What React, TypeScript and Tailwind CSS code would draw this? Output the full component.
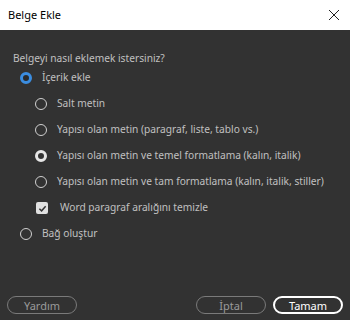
import React from 'react';

function Radio({ state }: { state: 'blue' | 'white' | 'off' }) {
  if (state === 'blue') {
    return <span className="box-border block h-[12px] w-[12px] shrink-0 rounded-full border-[3px] border-[#3b8de0] bg-[#2a2a2a]" />;
  }
  if (state === 'white') {
    return <span className="box-border block h-[12px] w-[12px] shrink-0 rounded-full border-[3px] border-[#e6e6e6] bg-[#333333]" />;
  }
  return <span className="box-border block h-[12px] w-[12px] shrink-0 rounded-full border border-[#d0d0d0]" />;
}

function Option({ label, state, indent }: { label: string; state: 'blue' | 'white' | 'off'; indent?: boolean }) {
  return (
    <div className={`flex h-[26px] items-center gap-[10px] whitespace-nowrap ${indent ? 'pl-[35px]' : 'pl-[20px]'}`}>
      <Radio state={state} />
      <span>{label}</span>
    </div>
  );
}

export default function App() {
  return (
    <div
      className="flex h-[320px] w-[350px] flex-col bg-[#323232] text-[10.2px] text-[#c0c0c0]"
      style={{ fontFamily: '"Noto Sans", "Open Sans", sans-serif' }}
    >
      {/* Title bar */}
      <div className="flex h-[30px] items-center justify-between bg-white pl-[8px] pr-[10px] text-[11px] text-black">
        <span>Belge Ekle</span>
        <svg width="12" height="12" viewBox="0 0 12 12">
          <path d="M1 1 L11 11 M11 1 L1 11" stroke="#222" strokeWidth="1" />
        </svg>
      </div>

      <div className="flex flex-1 flex-col pt-[21px]">
        <div className="pl-[13px] leading-[14px]">Belgeyi nasıl eklemek istersiniz?</div>
        <div className="flex flex-col">
          <Option label="İçerik ekle" state="blue" />
          <Option label="Salt metin" state="off" indent />
          <Option label="Yapısı olan metin (paragraf, liste, tablo vs.)" state="off" indent />
          <Option label="Yapısı olan metin ve temel formatlama (kalın, italik)" state="white" indent />
          <Option label="Yapısı olan metin ve tam formatlama (kalın, italik, stiller)" state="off" indent />
          <div className="flex h-[26px] items-center gap-[12px] whitespace-nowrap pl-[36px]">
            <span className="flex h-[12px] w-[12px] items-center justify-center rounded-[2px] bg-[#e0e0e0]">
              <svg width="9" height="9" viewBox="0 0 10 10">
                <path d="M1.5 5.2 L4 7.6 L8.5 2.5" fill="none" stroke="#333" strokeWidth="1.6" />
              </svg>
            </span>
            <span>Word paragraf aralığını temizle</span>
          </div>
          <Option label="Bağ oluştur" state="off" />
        </div>
      </div>

      {/* Buttons */}
      <div className="flex items-center justify-between px-[7px] pb-[6px]">
        <button className="h-[18px] w-[70px] rounded-full border border-[#7a7a7a] text-[11px] leading-none text-[#9a9a9a]">
          Yardım
        </button>
        <div className="flex gap-[7px]">
          <button className="h-[18px] w-[70px] rounded-full border border-[#7a7a7a] text-[11px] leading-none text-[#9a9a9a]">
            İptal
          </button>
          <button className="h-[18px] w-[70px] rounded-full border-2 border-white text-[11px] leading-none text-white">
            Tamam
          </button>
        </div>
      </div>
    </div>
  );
}
